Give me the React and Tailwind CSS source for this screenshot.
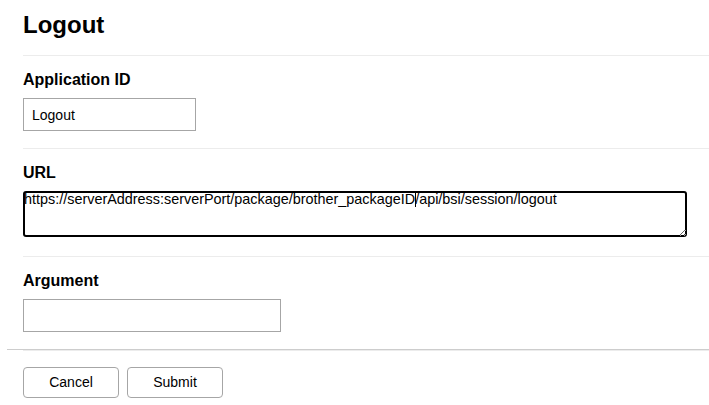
import React from "react";

export default function App() {
  return (
    <div className="w-[709px] h-[405px] overflow-hidden bg-white text-black font-['Liberation_Sans',Arial,sans-serif]">
      <div className="ml-[23px] h-[56px] border-b border-[#ececec] pt-[11px]">
        <h1 className="text-[24px] leading-[28px] font-bold">Logout</h1>
      </div>
      <div className="ml-[23px] h-[93px] border-b border-[#ececec] pt-[15px]">
        <div className="text-[16px] leading-[18px] font-bold">Application ID</div>
        <input
          readOnly
          value="Logout"
          className="mt-[9px] block w-[173px] h-[33px] border border-[#a6a6a6] px-[8px] text-[14px] outline-none font-['Liberation_Sans',Arial,sans-serif]"
        />
      </div>
      <div className="ml-[23px] h-[108px] border-b border-[#ececec] pt-[15px]">
        <div className="text-[16px] leading-[18px] font-bold">URL</div>
        <div className="relative mt-[9px] w-[664px] h-[46px]">
          <textarea
            readOnly
            value="https://serverAddress:serverPort/package/brother_packageID/api/bsi/session/logout"
            className="block w-[664px] h-[46px] p-0 pl-[1px] border-0 rounded-[3px] shadow-[inset_0_0_0_2px_#000] text-[14.4px] leading-[16px] outline-none resize-y font-['Liberation_Sans',Arial,sans-serif]"
          />
          <span className="absolute left-[392px] top-[2px] w-[1px] h-[14px] bg-black" />
        </div>
      </div>
      <div className="ml-[23px] h-[94px] border-b border-[#ececec] pt-[15px]">
        <div className="text-[16px] leading-[18px] font-bold">Argument</div>
        <input
          readOnly
          value=""
          className="mt-[9px] block w-[258px] h-[33px] border border-[#a6a6a6] px-[8px] text-[14px] outline-none font-['Liberation_Sans',Arial,sans-serif]"
        />
      </div>
      <div className="-mt-[2px] ml-[7px] border-t border-[#cdcdcd] pl-[16px] pt-[17px] flex gap-[8px]">
        <button className="w-[96px] h-[31px] rounded-[4px] border border-[#a6a6a6] bg-white text-[14px] text-black font-['Liberation_Sans',Arial,sans-serif]">
          Cancel
        </button>
        <button className="w-[96px] h-[31px] rounded-[4px] border border-[#a6a6a6] bg-white text-[14px] text-black font-['Liberation_Sans',Arial,sans-serif]">
          Submit
        </button>
      </div>
    </div>
  );
}
